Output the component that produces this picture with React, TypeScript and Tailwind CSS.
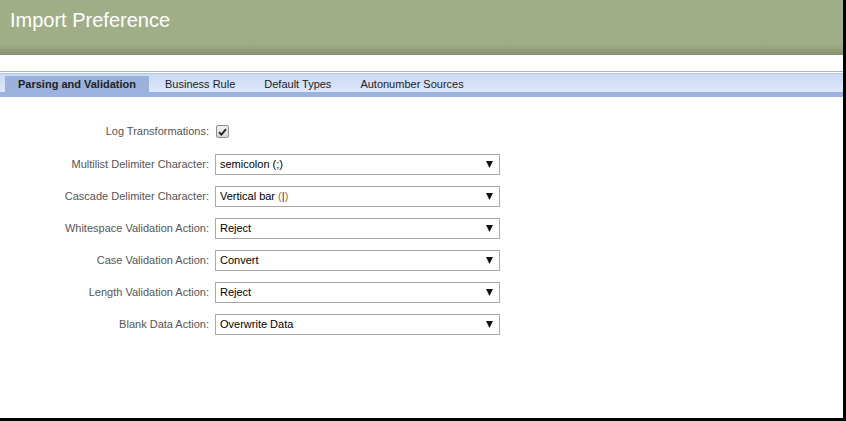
import React from "react";

const rows: { label: string; value: React.ReactNode }[] = [
  { label: "Multilist Delimiter Character:", value: "semicolon (;)" },
  {
    label: "Cascade Delimiter Character:",
    value: (
      <>
        Vertical bar <span className="text-[#b4651c]">(</span>
        <span className="text-[#1c2a6a]">|</span>
        <span className="text-[#b4651c]">)</span>
      </>
    ),
  },
  { label: "Whitespace Validation Action:", value: "Reject" },
  { label: "Case Validation Action:", value: "Convert" },
  { label: "Length Validation Action:", value: "Reject" },
  { label: "Blank Data Action:", value: "Overwrite Data" },
];

const tabs = ["Parsing and Validation", "Business Rule", "Default Types", "Autonumber Sources"];

function Select({ value }: { value: React.ReactNode }) {
  return (
    <div className="flex h-[21px] w-[285px] items-center justify-between border border-[#a9a9a9] bg-white pl-[4px] pr-[6px] text-[11px] text-black">
      <span>{value}</span>
      <svg width="7" height="7" viewBox="0 0 7 7">
        <path d="M0 0 H7 L3.5 7 Z" fill="#111" />
      </svg>
    </div>
  );
}

export default function App() {
  return (
    <div
      className="flex h-[421px] w-[846px] flex-col border-r-[3px] border-b-[3px] border-black bg-white"
      style={{ fontFamily: '"Liberation Sans", Arial, sans-serif' }}
    >
      <div className="h-[55px] bg-[linear-gradient(to_bottom,#a0ae88_0px,#a0ae88_43px,#939f7c_50px,#858f70_55px)] pl-[10px] pt-[7px] text-[20px] leading-[26px] text-white">
        Import Preference
      </div>
      <div className="h-[16px]" />
      <div className="border-t border-[#a3b3d6]" />
      <div className="h-[1px] bg-white" />
      <div className="flex h-[19px] items-end gap-[3px] border-t border-[#b6c5e4] bg-[linear-gradient(to_bottom,#cbd9f2,#dbe8fc)] pl-[5px]">
        {tabs.map((t, i) => (
          <div
            key={t}
            className={`flex h-[16px] items-center px-[13px] text-[11px] leading-none text-[#222] ${
              i === 0 ? "bg-[#9cb2dc] font-bold" : ""
            }`}
          >
            {t}
          </div>
        ))}
      </div>
      <div className="h-[5px] bg-[#9cb3df]" />

      <div className="grid grid-cols-[211px_auto] items-center gap-y-[11px] pt-[23px] text-[11px]">
        <div className="pr-[2px] text-right text-[#555]">Log Transformations:</div>
        <div className="flex h-[23px] items-center pl-[5px]">
          <div className="flex h-[13px] w-[13px] items-center justify-center rounded-[2px] border border-[#8f8f8f] bg-[linear-gradient(to_bottom,#f2f2f2,#d6d6d6)]">
            <svg width="9" height="8" viewBox="0 0 9 8">
              <path d="M1 4.2 L3.4 6.6 L8 1.2" stroke="#222" strokeWidth="1.8" fill="none" />
            </svg>
          </div>
        </div>
        {rows.map((r) => (
          <React.Fragment key={r.label}>
            <div className="pr-[2px] text-right text-[#555]">{r.label}</div>
            <div className="pl-[4px]">
              <Select value={r.value} />
            </div>
          </React.Fragment>
        ))}
      </div>
    </div>
  );
}
